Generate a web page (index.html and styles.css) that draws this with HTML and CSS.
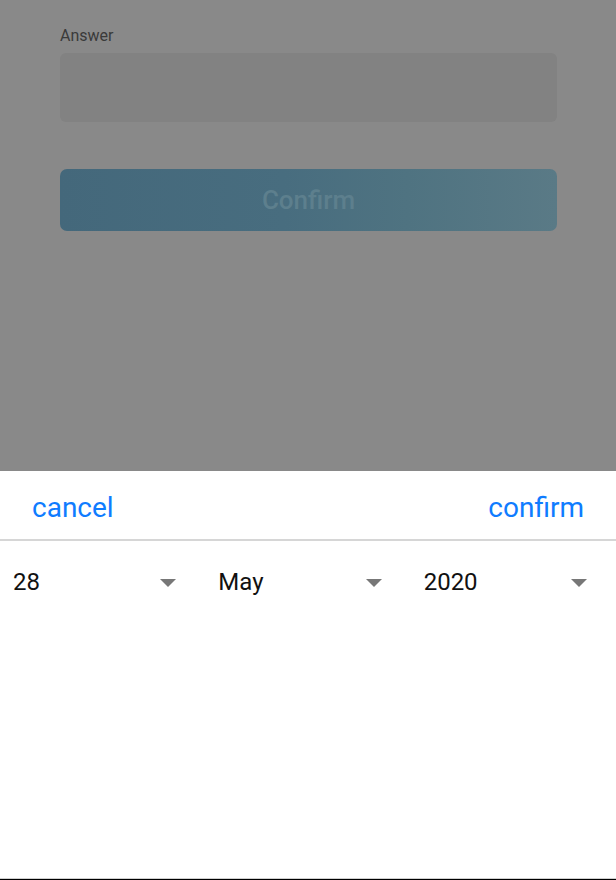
FILE: index.html
```html
<!DOCTYPE html>
<html>
<head>
<meta charset="utf-8">
<link rel="stylesheet" href="styles.css">
</head>
<body>
<div class="screen">
  <div class="dimmed">
    <div class="form">
      <div class="label">Answer</div>
      <div class="input"></div>
      <div class="button">Confirm</div>
    </div>
  </div>
  <div class="sheet">
    <div class="sheet-head">
      <span class="action">cancel</span>
      <span class="action">confirm</span>
    </div>
    <div class="divider"></div>
    <div class="spinners">
      <div class="spinner"><span class="value">28</span><span class="caret"></span></div>
      <div class="spinner"><span class="value">May</span><span class="caret"></span></div>
      <div class="spinner"><span class="value">2020</span><span class="caret"></span></div>
    </div>
    <div class="filler"></div>
    <div class="bottom-line"></div>
  </div>
</div>
</body>
</html>
```
FILE: styles.css
```css
html, body {
  margin: 0;
  padding: 0;
}
body {
  width: 616px;
  height: 880px;
  overflow: hidden;
  font-family: Roboto, "Liberation Sans", sans-serif;
}
.screen {
  display: flex;
  flex-direction: column;
  height: 880px;
}
.dimmed {
  flex: 1;
  background: #898989;
}
.form {
  padding: 26px 59px 0 60px;
  display: flex;
  flex-direction: column;
}
.label {
  font-size: 16px;
  line-height: 20px;
  color: #3a3a3a;
}
.input {
  margin-top: 7px;
  height: 69px;
  border-radius: 6px;
  background: #828282;
}
.button {
  margin-top: 47px;
  height: 62px;
  border-radius: 7px;
  background: linear-gradient(90deg, #44687b 0%, #486d7f 45%, #4f7381 70%, #5a7a86 100%);
  color: #5d7f8d;
  font-size: 26px;
  font-weight: 500;
  display: flex;
  align-items: center;
  justify-content: center;
}
.sheet {
  height: 409px;
  background: #fff;
  display: flex;
  flex-direction: column;
}
.sheet-head {
  height: 68px;
  display: flex;
  align-items: center;
  justify-content: space-between;
  padding: 4px 32px 0 32px;
  box-sizing: border-box;
}
.action {
  font-size: 28px;
  color: #0f7cff;
}
.divider {
  height: 2px;
  background: #d6d6d6;
}
.spinners {
  display: grid;
  grid-template-columns: repeat(3, 1fr);
  height: 80px;
  padding-top: 2px;
  box-sizing: border-box;
}
.spinner {
  display: flex;
  align-items: center;
  justify-content: space-between;
  padding: 0 29px 0 13px;
}
.value {
  font-size: 24px;
  color: #111;
}
.caret {
  width: 0;
  height: 0;
  border-left: 8px solid transparent;
  border-right: 8px solid transparent;
  border-top: 8px solid #777;
  margin-top: 1px;
}
.filler {
  flex: 1;
}
.bottom-line {
  height: 1px;
  background: #cfcfcf;
  border-bottom: 1px solid #000;
}
```
